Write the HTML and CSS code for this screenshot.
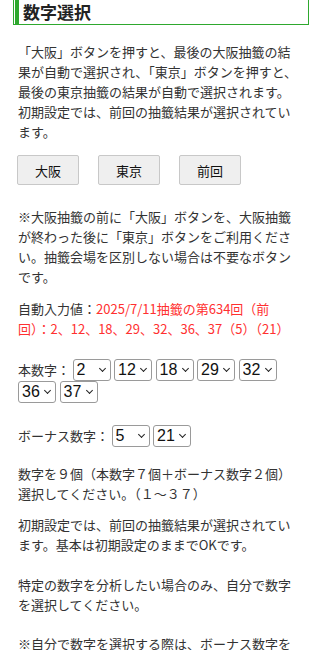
FILE: index.html
```html
<!DOCTYPE html>
<html lang="ja">
<head>
<meta charset="utf-8">
<title>数字選択</title>
<link rel="stylesheet" href="styles.css">
</head>
<body>
<div class="page">
  <h2 class="heading">数字選択</h2>
  <p class="p1">「大阪」ボタンを押すと、最後の大阪抽籤の結果が自動で選択され、「東京」ボタンを押すと、最後の東京抽籤の結果が自動で選択されます。初期設定では、前回の抽籤結果が選択されています。</p>
  <div class="buttons">
    <button class="btn" type="button">大阪</button>
    <button class="btn" type="button">東京</button>
    <button class="btn" type="button">前回</button>
  </div>
  <p class="p2">※大阪抽籤の前に「大阪」ボタンを、大阪抽籤が終わった後に「東京」ボタンをご利用ください。抽籤会場を区別しない場合は不要なボタンです。</p>
  <p class="p3">自動入力値：<span class="red">2025/7/11抽籤の第634回（前回）：2、12、18、29、32、36、37（5）（21）</span></p>
  <div class="selrow main">
    <span class="label">本数字：</span>
    <span class="sel"><select class="num"><option>2</option></select></span>
    <span class="sel"><select class="num"><option>12</option></select></span>
    <span class="sel"><select class="num"><option>18</option></select></span>
    <span class="sel"><select class="num"><option>29</option></select></span>
    <span class="sel"><select class="num"><option>32</option></select></span>
    <span class="sel"><select class="num"><option>36</option></select></span>
    <span class="sel"><select class="num"><option>37</option></select></span>
  </div>
  <div class="selrow bonus">
    <span class="label">ボーナス数字：</span>
    <span class="sel"><select class="num"><option>5</option></select></span>
    <span class="sel"><select class="num"><option>21</option></select></span>
  </div>
  <p class="p4">数字を９個（本数字７個＋ボーナス数字２個）選択してください。（１～３７）</p>
  <p class="p5">初期設定では、前回の抽籤結果が選択されています。基本は初期設定のままでOKです。</p>
  <p class="p6">特定の数字を分析したい場合のみ、自分で数字を選択してください。</p>
  <p class="p7">※自分で数字を選択する際は、ボーナス数字を</p>
</div>
</body>
</html>
```
FILE: styles.css
```css
html, body {
  margin: 0;
  padding: 0;
  background: #fff;
}
body {
  font-family: "Noto Sans CJK JP", sans-serif;
  font-size: 13px;
  line-height: 20px;
  color: #333;
  overflow: hidden;
}
.page {
  padding: 0 11px 0 13px;
}
.heading {
  margin: -13px 0 0 0;
  padding: 12px 8px 0 9px;
  border: 1px solid #2ea82e;
  box-shadow: inset 1px 0 0 #fff, inset 5px 0 0 #2ea82e;
  font-size: 17px;
  font-weight: bold;
  line-height: 24px;
  color: #222;
}
p {
  margin: 0 10px 0 5px;
}
.p1 { margin-top: 17px; }
.buttons {
  display: flex;
  gap: 19px;
  margin: 13px 0 0 4px;
}
.btn {
  width: 62px;
  height: 30px;
  padding: 0;
  border: 1px solid #c8c8c8;
  border-radius: 2px;
  background: #efefef;
  font-family: "Noto Sans CJK JP", sans-serif;
  font-size: 13px;
  color: #111;
}
.p2 { margin-top: 22px; }
.p3 { margin-top: 12px; }
.red { color: #ff3030; }
.selrow {
  display: flex;
  flex-wrap: wrap;
  align-items: center;
  column-gap: 3.5px;
  margin: 0 7px 0 5px;
}
.main { margin-top: 20px; }
.bonus { margin-top: 22px; }
.label { margin-right: -1px; }
.sel {
  position: relative;
  display: block;
  width: 38px;
  height: 22px;
}
.sel::after {
  content: "";
  position: absolute;
  right: 6px;
  top: 7px;
  width: 4px;
  height: 4px;
  border-right: 1.5px solid #222;
  border-bottom: 1.5px solid #222;
  transform: rotate(45deg);
  pointer-events: none;
}
.num {
  appearance: none;
  -webkit-appearance: none;
  box-sizing: border-box;
  display: block;
  width: 38px;
  height: 22px;
  margin: 0;
  padding: 0 0 0 3px;
  border: 1px solid #9a9a9a;
  border-radius: 3px;
  background: #fff;
  font-family: "Liberation Sans", Arial, sans-serif;
  font-size: 16px;
  line-height: 20px;
  color: #111;
}
.p4 { margin-top: 17px; }
.p5 { margin-top: 11px; }
.p6 { margin-top: 20px; }
.p7 { margin-top: 19px; }
```
